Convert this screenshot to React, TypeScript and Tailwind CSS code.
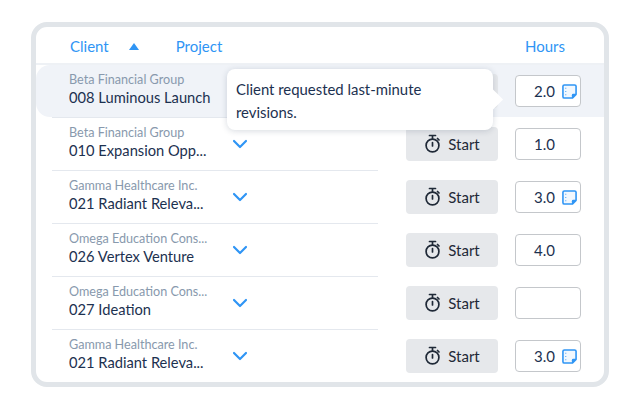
import { ChevronDown } from 'lucide-react'

const filas = [
  { cliente: 'Beta Financial Group', proyecto: '008 Luminous Launch', horas: '2.0', nota: true },
  { cliente: 'Beta Financial Group', proyecto: '010 Expansion Opp...', horas: '1.0', nota: false },
  { cliente: 'Gamma Healthcare Inc.', proyecto: '021 Radiant Releva...', horas: '3.0', nota: true },
  { cliente: 'Omega Education Cons...', proyecto: '026 Vertex Venture', horas: '4.0', nota: false },
  { cliente: 'Omega Education Cons...', proyecto: '027 Ideation', horas: '', nota: false },
  { cliente: 'Gamma Healthcare Inc.', proyecto: '021 Radiant Releva...', horas: '3.0', nota: true },
]

function IconoNota() {
  return (
    <svg width="15" height="15" viewBox="0 0 16 16" fill="none" className="shrink-0">
      <path d="M2.500 1h11a1.500 1.500 0 0 1 1.500 1.500v8.500l-4 4h-8.500a1.500 1.500 0 0 1-1.500-1.500v-11a1.500 1.500 0 0 1 1.500-1.500z" fill="#f2f8fe" stroke="#2f95f5" strokeWidth="1.700" strokeLinejoin="round" />
      <path d="M15 10.500h-3a1.500 1.500 0 0 0-1.500 1.500v3z" fill="#2f95f5" />
      <path d="M4 4v1M4 7.500v1M4 11v1" stroke="#5aaaf6" strokeWidth="1.200" />
    </svg>
  )
}

function IconoCrono() {
  return (
    <svg width="17" height="20" viewBox="0 0 17 20" fill="none" stroke="#1f2937" strokeWidth="1.700" className="shrink-0">
      <circle cx="8.500" cy="11.500" r="6.400" />
      <path d="M5.500 1.500h6M8.500 1.500v3.500M8.500 8.500v3.500" strokeLinecap="round" />
      <path d="M13.500 4.500l1.500 1.500" strokeLinecap="round" />
    </svg>
  )
}

function BotonStart() {
  return (
    <button className="w-[92px] h-[34px] rounded bg-[#e6e8eb] flex items-center justify-center gap-[7px] text-[15px] text-[#1f2937]">
      <IconoCrono />
      <span className="pt-[2px]">Start</span>
    </button>
  )
}

function Horas({ valor, nota }: { valor: string; nota: boolean }) {
  return (
    <div className={`w-[66px] h-[32px] rounded border border-[#c4c7cb] bg-white flex items-center justify-end text-[15px] text-[#1c3150] ${nota ? 'pr-[3px] gap-[7px]' : 'pr-[25px]'}`}>
      {valor}
      {nota && <IconoNota />}
    </div>
  )
}

function Titulos({ cliente, proyecto }: { cliente: string; proyecto: string }) {
  return (
    <div className="pl-[17px] pb-[3px] w-[326px] flex flex-col">
      <span className="text-[12.6px] leading-[16px] text-[#8899ad]">{cliente}</span>
      <span className="text-[14.7px] leading-[19px] text-[#1c3150]">{proyecto}</span>
    </div>
  )
}

export default function App() {
  return (
    <div className="w-[640px] h-[400px] bg-white pt-[22px] pl-[31px] overflow-hidden" style={{ fontFamily: 'Lato, sans-serif' }}>
      <div className="relative w-[578px] h-[365px] rounded-[16px] border-[5px] border-[#e1e5e9] bg-white overflow-hidden">
        {/* Cabecera */}
        <div className="h-[38px] pt-[3px] flex items-center border-b-2 border-[#eef1f5] text-[15px] text-[#2f95f5]">
          <span className="ml-[34px]">Client</span>
          <span className="ml-[20px] mb-[1px] w-0 h-0 border-x-[5px] border-x-transparent border-b-[7px] border-b-[#2f95f5]" />
          <span className="ml-[37px]">Project</span>
          <span className="ml-auto mr-[39px]">Hours</span>
        </div>

        {filas.map((f, i) => (
          <div key={i} className={i === 0 ? 'h-[52px] flex items-center bg-[#f0f3f8] rounded-l-[14px]' : 'h-[53px] flex items-center'}>
            <div className={`relative ml-[16px] h-full w-[326px] flex items-center ${i === 0 ? '' : 'border-t-[1.5px] border-[#e4e8ee]'}`}>
              <Titulos cliente={f.cliente} proyecto={f.proyecto} />
              <ChevronDown className="absolute left-[176px] top-[14px] text-[#2f95f5]" size={24} strokeWidth={2.2} />
            </div>
            <div className="ml-[28px]">
              <BotonStart />
            </div>
            <div className={i === 0 ? 'ml-[17px]' : 'ml-[17px] mt-[1px]'}>
              <Horas valor={f.horas} nota={f.nota} />
            </div>
          </div>
        ))}

        {/* Tooltip */}
        <div className="absolute left-[191px] top-[42px] w-[266px] h-[61px] rounded-lg bg-white shadow-[0_1px_6px_rgba(30,50,80,0.18)] px-[9px] py-[9px] text-[14.9px] leading-[22.5px] text-[#1c3150]">
          Client requested last-minute
          <br />
          revisions.
          <span className="absolute -right-[7px] top-[23px] w-[15px] h-[15px] rotate-45 bg-white" />
        </div>
      </div>
    </div>
  )
}
